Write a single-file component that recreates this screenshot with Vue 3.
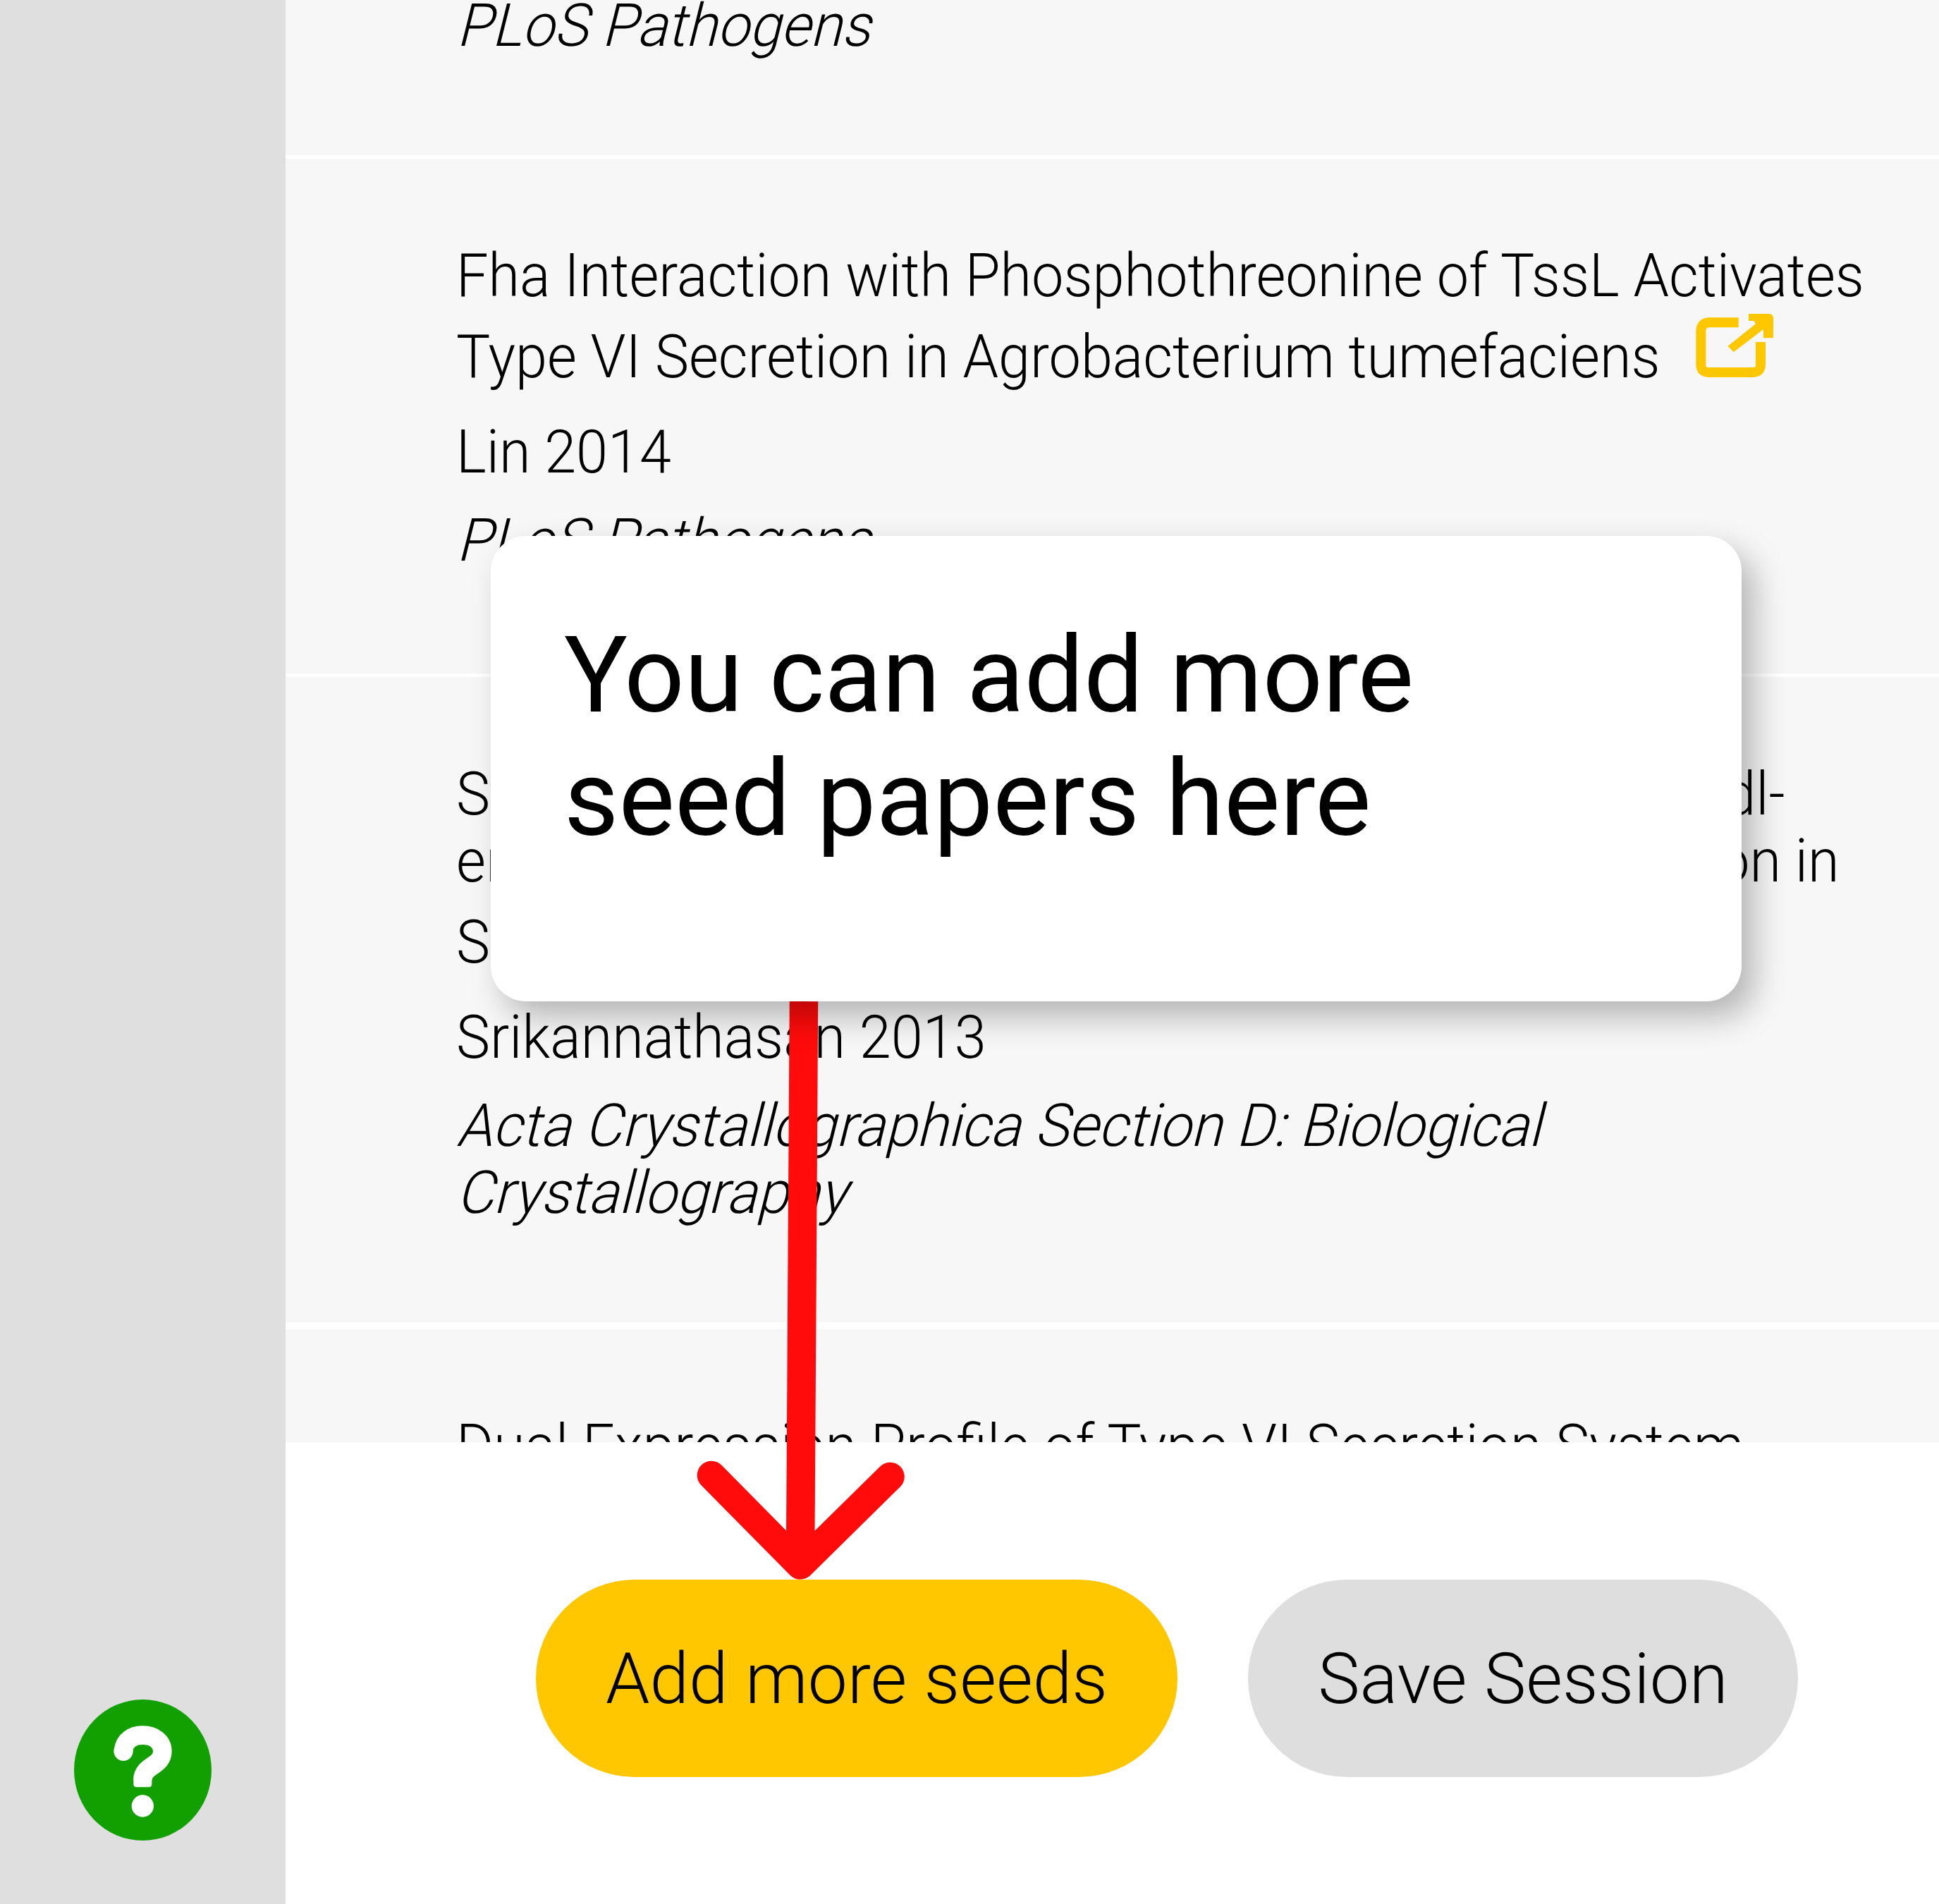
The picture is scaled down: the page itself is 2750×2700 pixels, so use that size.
<script setup>
const papers = [
  { id: 'first', title: [], author: '', journal: ['PLoS Pathogens'] },
  {
    id: 'lin',
    title: [
      'Fha Interaction with Phosphothreonine of TssL Activates',
      'Type VI Secretion in Agrobacterium tumefaciens',
    ],
    author: 'Lin 2014',
    journal: ['PLoS Pathogens'],
  },
  {
    id: 'srik',
    title: [
      'Structural basis for type VI secreted peptidoglycan dl-',
      'endopeptidase function, specificity and neutralization in',
      'Serratia marcescens',
    ],
    author: 'Srikannathasan 2013',
    journal: ['Acta Crystallographica Section D: Biological', 'Crystallography'],
  },
  {
    id: 'dual',
    title: ['Dual Expression Profile of Type VI Secretion System'],
    author: '',
    journal: [],
  },
]
</script>

<template>
  <div class="page">
    <aside class="sidebar">
      <svg class="help" viewBox="135 150 585 600" preserveAspectRatio="none">
        <ellipse cx="427.5" cy="450" rx="292.5" ry="300" fill="#11a000" />
        <path
          d="M345 367C350 325 382 302 427 302C475 302 511 329 511 370C511 436 427 428 427 494"
          fill="none" stroke="#fff" stroke-width="80"
        />
        <circle cx="345" cy="370" r="41" fill="#fff" />
        <path d="M388 485H466V510Q466 523 453 523H402Q388 523 388 510Z" fill="#fff" />
        <circle cx="427" cy="603" r="47" fill="#fff" />
      </svg>
    </aside>

    <main class="panel">
      <div class="list">
        <article v-for="p in papers" :key="p.id" class="paper" :class="p.id">
          <h2 v-if="p.title.length" class="title">
            <span
              v-for="(line, i) in p.title" :key="i" class="line"
              :class="{ last: i > 0 && i === p.title.length - 1 }"
            ><span class="txt">{{ line }}</span><svg
              v-if="p.id === 'lin' && i === 1" class="ext" viewBox="315 135 330 270"
            >
              <path
                d="M497 172H375Q337 172 337 208V350Q337 384 372 384H556Q591 384 591 350V255"
                fill="none" stroke="#ffc700" stroke-width="42"
              />
              <path d="M540 135H625Q645 135 645 155V238H603V201L476 298L452 272L570 178L562 165H540Z" fill="#ffc700" />
            </svg></span>
          </h2>
          <p v-if="p.author" class="author"><span class="txt">{{ p.author }}</span></p>
          <p v-if="p.journal.length" class="journal">
            <span v-for="line in p.journal" :key="line" class="line"><span class="txt">{{ line }}</span></span>
          </p>
        </article>
      </div>
      <footer class="actions">
        <button class="btn primary">Add more seeds</button>
        <button class="btn">Save Session</button>
      </footer>
    </main>

    <svg class="arrow" viewBox="0 0 320 840">
      <g fill="none" stroke="#ff0b0b" stroke-width="40.5" stroke-linejoin="round">
        <path d="M160 0L155 799" />
        <path d="M29 672L155 799.5L282.5 674" stroke-linecap="round" />
      </g>
    </svg>
    <div class="callout">You can add more<br>seed papers here</div>
  </div>
</template>

<style>
body {
  margin: 0;
}
</style>

<style scoped>
.page {
  position: relative;
  display: flex;
  width: 2750px;
  height: 2700px;
  overflow: hidden;
  background: #fff;
  color: #000;
  font-family: Roboto, "Liberation Sans", sans-serif;
  font-weight: 300;
}
.sidebar {
  box-sizing: border-box;
  display: flex;
  align-items: flex-end;
  width: 405px;
  padding: 0 0 90px 105px;
  background: #dfdfdf;
}
.help {
  display: block;
  width: 195px;
  height: 200px;
}
.panel {
  display: flex;
  flex-direction: column;
  width: 2345px;
}
.list {
  height: 2045px;
  overflow: hidden;
  background: #f7f7f7;
}
.paper {
  padding: 120px 0 135px 242px;
  border-bottom: 5px solid #fff;
  font-size: 81px;
  line-height: 95px;
  white-space: nowrap;
}
.paper.first {
  padding-top: 0;
  margin-top: -10px;
}
.paper.lin {
  padding-bottom: 140px;
}
.paper.srik {
  border-bottom-width: 10px;
}
.title,
.author,
.journal {
  margin: 0;
  font-size: inherit;
  font-weight: inherit;
}
.author {
  margin-top: 40px;
}
.author + .journal {
  margin-top: 30px;
}
.line {
  display: flex;
}
.line.last {
  margin-top: 20px;
}
.txt {
  display: inline-block;
  transform: scaleY(1.042);
  transform-origin: 0 75px;
}
/* Slanted upright face: keeps the upright letter widths */
.journal .txt {
  transform: skewX(-14deg) scaleY(1.042);
}
.ext {
  width: 110px;
  height: 90px;
  margin: -15px 0 0 50px;
}
.actions {
  display: flex;
  gap: 100px;
  padding: 195px 0 0 355px;
}
.btn {
  width: 780px;
  height: 280px;
  padding: 0;
  border: 0;
  border-radius: 140px;
  background: #dedede;
  color: #000;
  font: inherit;
  font-size: 100px;
  white-space: nowrap;
}
.btn.primary {
  width: 910px;
  background: #ffc700;
}
.arrow {
  position: absolute;
  left: 980px;
  top: 1420px;
  width: 320px;
  height: 840px;
}
.callout {
  position: absolute;
  left: 696px;
  top: 760px;
  box-sizing: border-box;
  width: 1774px;
  height: 660px;
  padding: 111px 104px;
  border-radius: 50px;
  background: #fff;
  box-shadow: 18px 22px 46px rgba(0, 0, 0, 0.27);
  font-size: 150px;
  font-weight: 400;
  line-height: 175px;
}
</style>
